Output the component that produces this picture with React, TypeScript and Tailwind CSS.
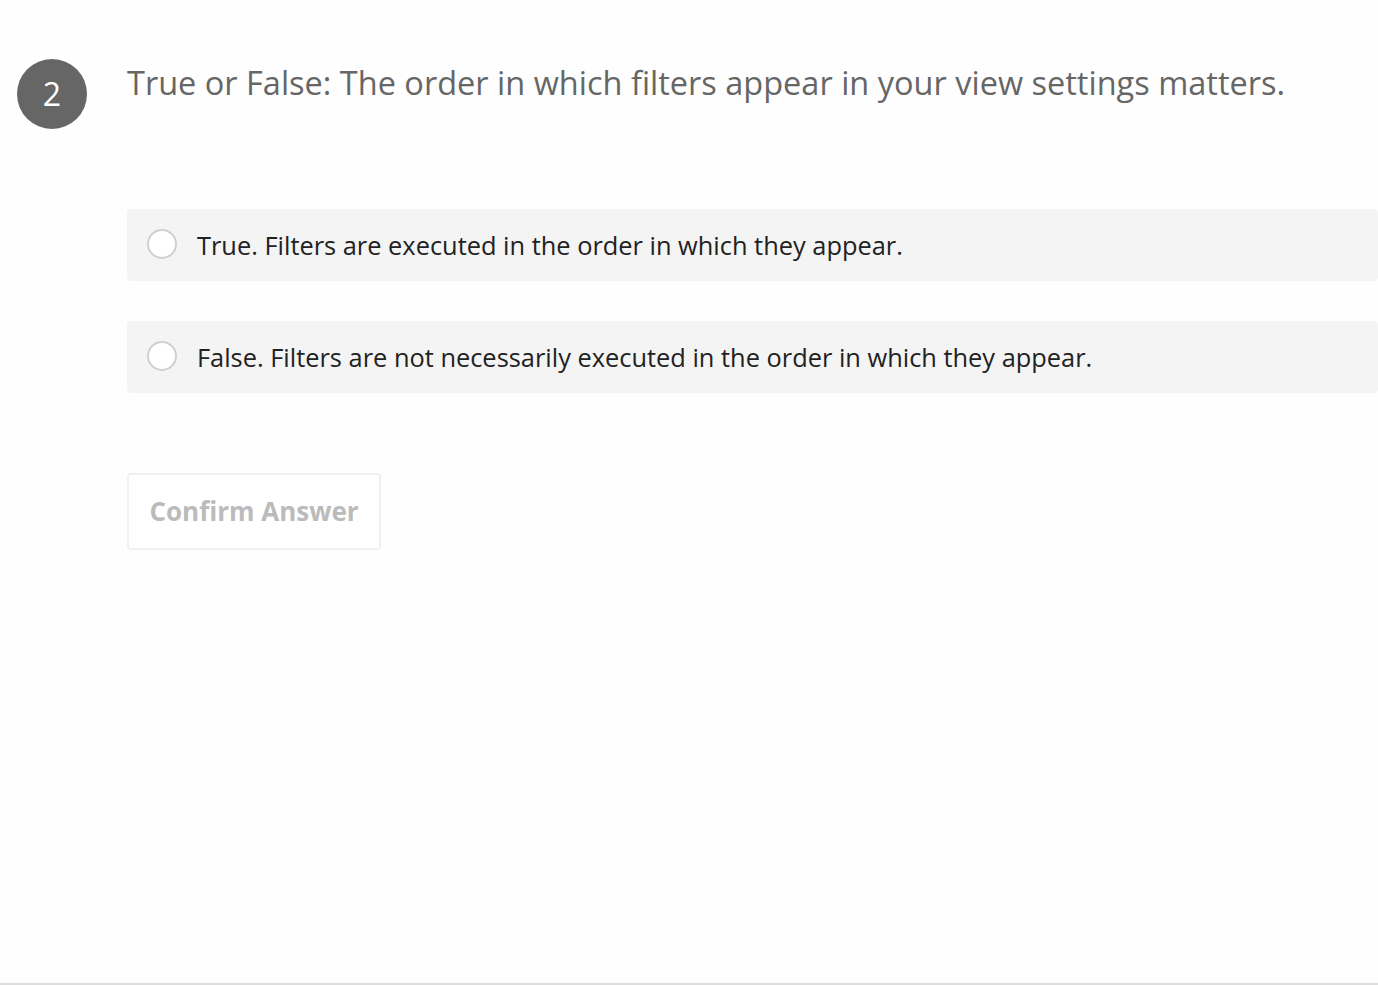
const options = [
  "True. Filters are executed in the order in which they appear.",
  "False. Filters are not necessarily executed in the order in which they appear.",
];

export default function App() {
  return (
    <div
      className="flex h-[985px] w-full flex-col bg-[#fefefe] text-[#222]"
      style={{ fontFamily: '"Open Sans", sans-serif' }}
    >
      <div className="flex-1">
        <div className="flex items-start gap-10 pl-[17px] pt-[59px]">
          <div className="flex h-[70px] w-[70px] shrink-0 items-center justify-center rounded-full bg-[#666] text-[32px] text-white">
            2
          </div>
          <h2 className="pt-[1px] text-[32.5px] leading-[46px] text-[#666]">
            True or False: The order in which filters appear in your view settings matters.
          </h2>
        </div>

        <div className="ml-[127px] mt-[80px] flex flex-col gap-10">
          {options.map((text) => (
            <label
              key={text}
              className="flex h-[72px] cursor-pointer items-center gap-5 rounded bg-[#f4f4f4] pl-5"
            >
              <span className="-mt-[2px] h-[30px] w-[30px] shrink-0 rounded-full border-2 border-[#d0d0d0] bg-white" />
              <span className="text-[25.4px] text-[#222]">{text}</span>
            </label>
          ))}
        </div>

        <button
          disabled
          className="ml-[127px] mt-[80px] h-[77px] w-[254px] rounded border-2 border-[#f0f0f0] bg-white text-[26px] font-bold text-[#bbb]"
        >
          Confirm Answer
        </button>
      </div>
      <div className="h-[2px] bg-[#ddd]" />
    </div>
  );
}
